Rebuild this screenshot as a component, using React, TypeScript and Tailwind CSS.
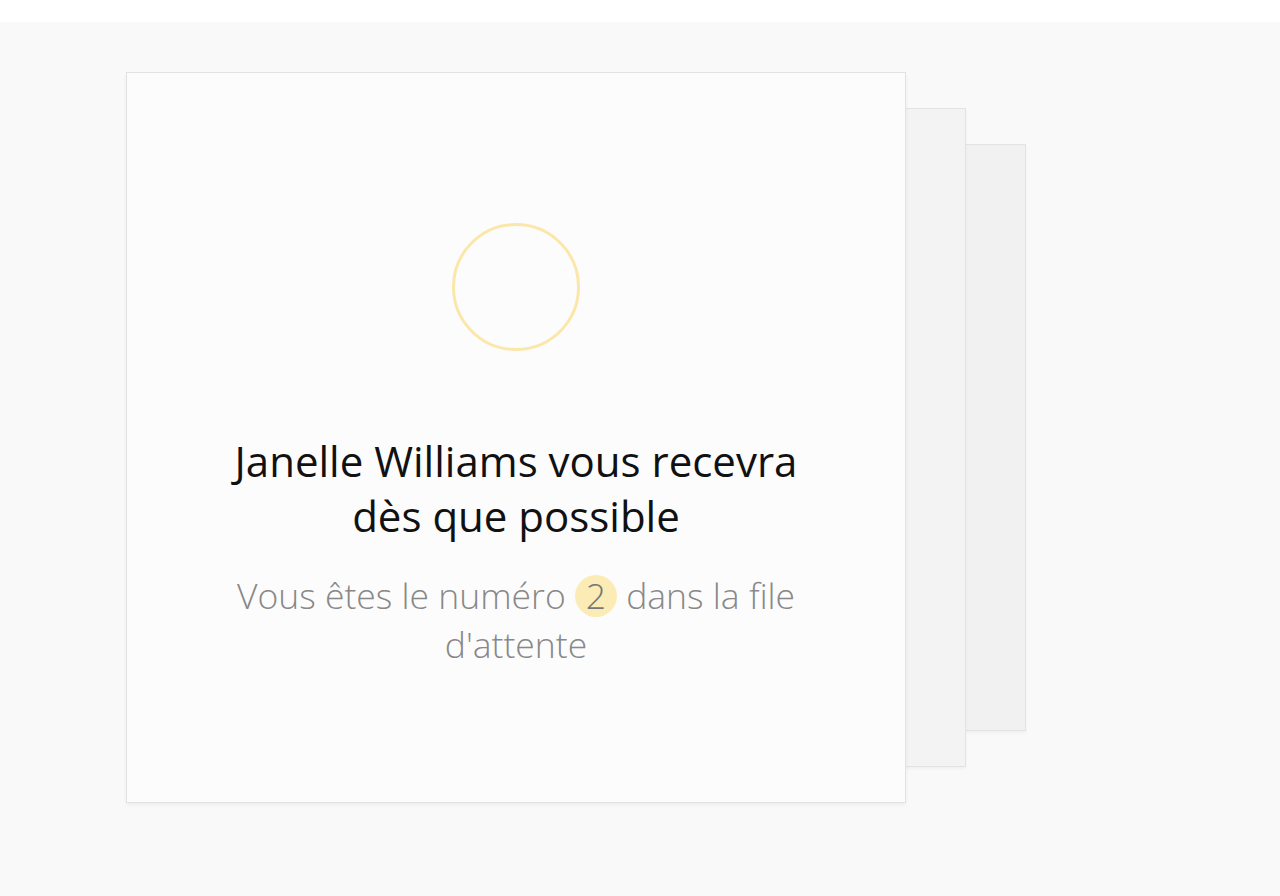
import { FC } from "react";

const App: FC = () => {
  return (
    <div className="w-[1280px] h-[896px] bg-white font-['Open_Sans',sans-serif] overflow-hidden">
      <div className="h-[22px] bg-white" />
      <div className="h-[874px] bg-[#f9f9f9] pt-[50px] pl-[126px]">
        <div className="relative w-[780px] h-[731px]">
          {/* stacked cards behind */}
          <div className="absolute left-[120px] top-[72px] w-[780px] h-[587px] bg-[#f1f1f1] border border-[#e3e3e3] shadow-[0_2px_3px_rgba(0,0,0,0.04)]" />
          <div className="absolute left-[60px] top-[36px] w-[780px] h-[659px] bg-[#f3f3f3] border border-[#e3e3e3] shadow-[0_2px_3px_rgba(0,0,0,0.04)]" />
          <div className="absolute inset-0 bg-[#fcfcfc] border border-[#e2e2e2] shadow-[0_2px_4px_rgba(0,0,0,0.05)] flex flex-col items-center">
            <div className="mt-[150px] w-[128px] h-[128px] rounded-full border-[3px] border-[#fbe7aa]" />
            <h1 className="mt-[82px] text-[42px] leading-[55px] text-[#111] text-center">
              Janelle Williams vous recevra
              <br />
              dès que possible
            </h1>
            <p className="mt-[28px] text-[35.5px] leading-[49px] text-[#888] text-center font-light">
              Vous êtes le numéro{" "}
              <span className="inline-flex items-center justify-center w-[42px] h-[42px] rounded-full bg-[#fbebb5] text-[#777]">
                2
              </span>{" "}
              dans la file
              <br />
              d'attente
            </p>
          </div>
        </div>
      </div>
    </div>
  );
};

export default App;
